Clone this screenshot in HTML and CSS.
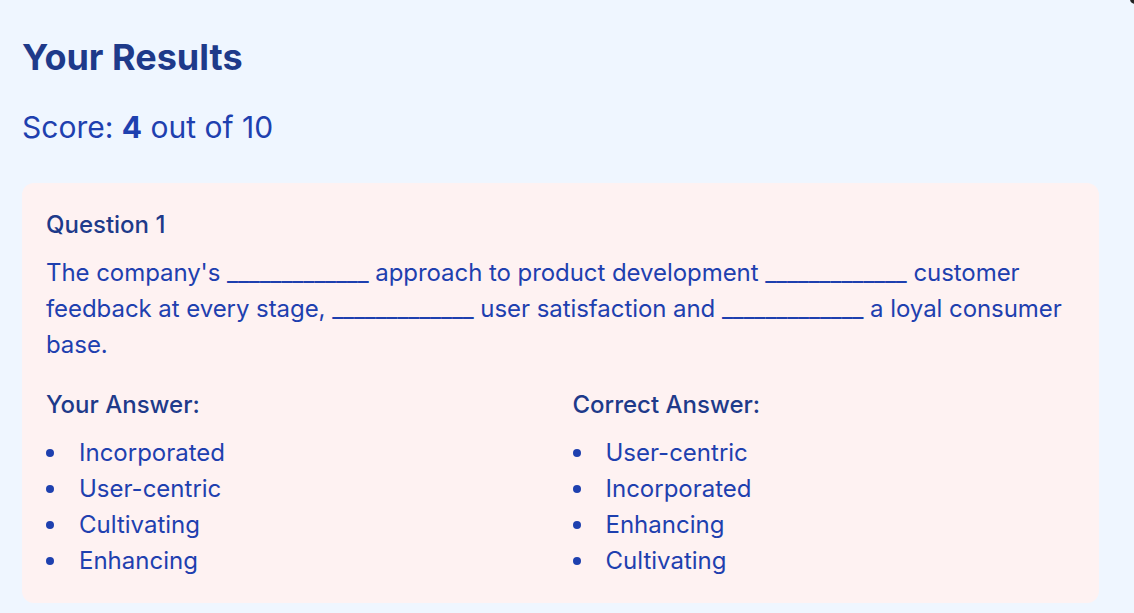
FILE: index.html
```html
<!DOCTYPE html>
<html lang="en">
<head>
<meta charset="utf-8">
<title>Your Results</title>
<link rel="stylesheet" href="styles.css">
</head>
<body>
<main class="results">
  <h1 class="results-title">Your Results</h1>
  <p class="score">Score: <strong>4</strong> out of 10</p>
  <section class="question-card">
    <h2 class="question-label">Question 1</h2>
    <p class="question-text">The company's _____________ approach to product development _____________ customer feedback at every stage, _____________ user satisfaction and _____________ a loyal consumer base.</p>
    <div class="answers">
      <div class="answer-col">
        <h3 class="answer-heading">Your Answer:</h3>
        <ul class="answer-list">
          <li>Incorporated</li>
          <li>User-centric</li>
          <li>Cultivating</li>
          <li>Enhancing</li>
        </ul>
      </div>
      <div class="answer-col">
        <h3 class="answer-heading">Correct Answer:</h3>
        <ul class="answer-list">
          <li>User-centric</li>
          <li>Incorporated</li>
          <li>Enhancing</li>
          <li>Cultivating</li>
        </ul>
      </div>
    </div>
  </section>
</main>
<div class="corner"></div>
</body>
</html>
```
FILE: styles.css
```css
html, body {
  margin: 0;
  padding: 0;
}
body {
  background: #eff6ff;
  font-family: Inter, "Noto Sans", sans-serif;
  color: #1e40af;
  overflow: hidden;
}
.results {
  padding: 37px 35px 0 22px;
}
.results-title {
  margin: 0;
  font-size: 36px;
  line-height: 40px;
  font-weight: 700;
  color: #1e3a8a;
}
.score {
  margin: 32px 0 0;
  font-size: 30px;
  line-height: 36px;
  color: #1e40af;
}
.score strong {
  font-weight: 700;
}
.question-card {
  margin-top: 38px;
  background: #fef2f2;
  border-radius: 12px;
  padding: 26px 24px 24px;
}
.question-label {
  margin: 0;
  font-size: 24px;
  line-height: 32px;
  font-weight: 500;
  color: #1e3a8a;
}
.question-text {
  margin: 14px 0 0;
  font-size: 24px;
  line-height: 36px;
  letter-spacing: -0.06px;
}
.answers {
  margin-top: 26px;
  display: grid;
  grid-template-columns: 1fr 1fr;
  gap: 24px;
}
.answer-heading {
  margin: 0;
  font-size: 24px;
  line-height: 32px;
  font-weight: 500;
  color: #1e3a8a;
}
.answer-list {
  list-style: none;
  margin: 14px 0 0;
  padding: 0;
}
.answer-list li {
  display: flex;
  align-items: center;
  gap: 25px;
  font-size: 24px;
  line-height: 36px;
}
.answer-list li::before {
  content: "";
  width: 8px;
  height: 8px;
  border-radius: 50%;
  background: #1e40af;
  flex: none;
}
.corner {
  position: absolute;
  top: -6px;
  right: -6px;
  width: 10px;
  height: 10px;
  border-radius: 50%;
  background: #222;
}
```
